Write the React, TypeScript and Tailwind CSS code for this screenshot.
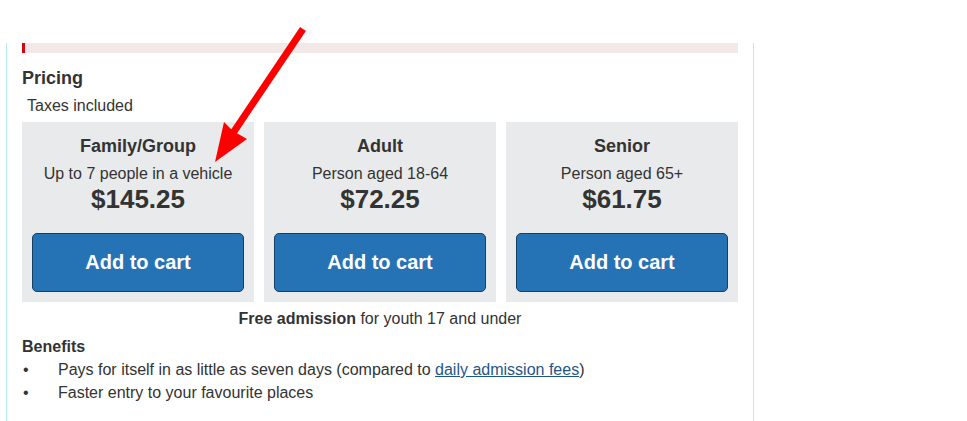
import React from 'react';

interface PassOption {
    title: string;
    subtitle: string;
    price: string;
}

const options: PassOption[] = [
    { title: 'Family/Group', subtitle: 'Up to 7 people in a vehicle', price: '$145.25' },
    { title: 'Adult', subtitle: 'Person aged 18-64', price: '$72.25' },
    { title: 'Senior', subtitle: 'Person aged 65+', price: '$61.75' },
];

const PassCard: React.FC<{ option: PassOption }> = ({ option }) => (
    <div className="bg-[#e9eaeb] pt-[14px] pb-[10px] px-[10px] flex flex-col items-center text-center">
        <h3 className="text-[18px] leading-[20px] font-bold">{option.title}</h3>
        <p className="text-[16px] leading-[20px] mt-[8px]">{option.subtitle}</p>
        <p className="text-[26px] leading-[30px] font-bold">{option.price}</p>
        <button className="mt-[19px] w-full h-[59px] pb-[2px] bg-[#2572b4] border border-[#173e63] rounded-[5px] text-white text-[20px] font-bold flex items-center justify-center">
            Add to cart
        </button>
    </div>
);

export default function App() {
    return (
        <div className="relative w-[967px] h-[421px] bg-white overflow-hidden text-[#333] font-['Liberation_Sans',Arial,sans-serif]">
            <div className="ml-[6px] mt-[43px] w-[748px] h-[378px] border-l border-r border-[#b6ecef] px-[15px]">
                {/* alert strip */}
                <div className="h-[10px] bg-[#f3e8e8] border-l-[3px] border-[#d3080c]" />

                <h2 className="mt-[15px] text-[18px] leading-[20px] font-bold">Pricing</h2>
                <p className="mt-[8px] pl-[5px] text-[16px] leading-[20px]">Taxes included</p>

                <div className="mt-[6px] grid grid-cols-3 gap-[10px]">
                    {options.map(o => (
                        <PassCard key={o.title} option={o} />
                    ))}
                </div>

                <p className="mt-[7px] text-center text-[16px] leading-[20px]">
                    <strong>Free admission</strong> for youth 17 and under
                </p>

                <h4 className="mt-[8px] text-[16px] leading-[20px] font-bold">Benefits</h4>
                <ul className="mt-[1px] text-[16px] leading-[23px]">
                    <li className="flex">
                        <span className="w-[36px] shrink-0 pl-[1px]">•</span>
                        <span>
                            Pays for itself in as little as seven days (compared to{' '}
                            <a href="#" className="text-[#1f5689] underline">daily admission fees</a>)
                        </span>
                    </li>
                    <li className="flex">
                        <span className="w-[36px] shrink-0 pl-[1px]">•</span>
                        <span>Faster entry to your favourite places</span>
                    </li>
                </ul>
            </div>

            {/* annotation arrow */}
            <svg className="absolute top-0 left-0 pointer-events-none" width="967" height="421">
                <line x1="303" y1="29" x2="233" y2="133" stroke="#ff0000" strokeWidth="7" />
                <polygon points="215,162 224,122 233,131 247,139" fill="#ff0000" />
            </svg>
        </div>
    );
}
